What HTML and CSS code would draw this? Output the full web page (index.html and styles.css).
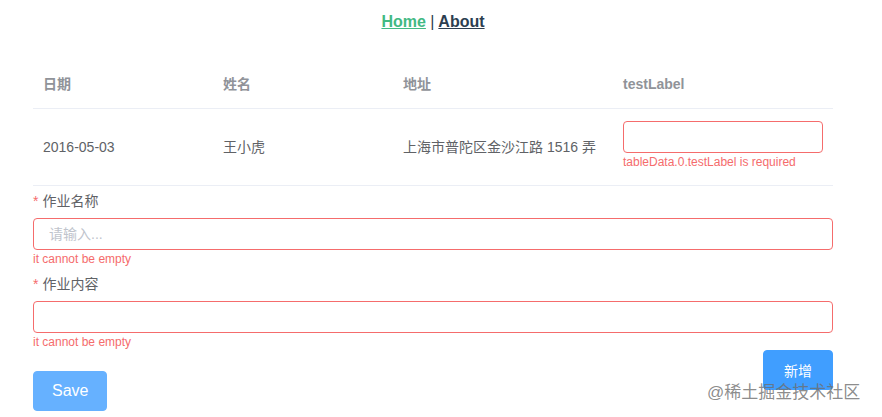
FILE: index.html
```html
<!DOCTYPE html>
<html lang="en">
<head>
    <meta charset="UTF-8">
    <meta name="viewport" content="width=device-width, initial-scale=1.0">
    <title>Form Table</title>
    <link rel="stylesheet" href="styles.css">
</head>
<body>
    <div id="app">
        <div class="nav">
            <a href="#" class="nav-link active">Home</a> <span class="sep">|</span> <a href="#" class="nav-link">About</a>
        </div>

        <div class="container">
            <table class="data-table">
                <thead>
                    <tr>
                        <th class="col-date">日期</th>
                        <th class="col-name">姓名</th>
                        <th class="col-addr">地址</th>
                        <th class="col-label">testLabel</th>
                    </tr>
                </thead>
                <tbody>
                    <tr>
                        <td>2016-05-03</td>
                        <td>王小虎</td>
                        <td>上海市普陀区金沙江路 1516 弄</td>
                        <td>
                            <input type="text" class="input is-error table-input">
                            <div class="error">tableData.0.testLabel is required</div>
                        </td>
                    </tr>
                </tbody>
            </table>

            <div class="form-item">
                <label class="form-label"><span class="required">*</span>作业名称</label>
                <input type="text" class="input is-error" placeholder="请输入...">
                <div class="error">it cannot be empty</div>
            </div>

            <div class="form-item">
                <label class="form-label"><span class="required">*</span>作业内容</label>
                <input type="text" class="input is-error">
                <div class="error">it cannot be empty</div>
            </div>

            <div class="actions">
                <button class="btn btn-save">Save</button>
                <button class="btn btn-add">新增</button>
            </div>
        </div>

        <div class="watermark">@稀土掘金技术社区</div>
    </div>
</body>
</html>
```

FILE: styles.css
```css
body {
    margin: 0;
    padding: 0;
    font-family: "Liberation Sans", Arial, "Noto Sans CJK SC", sans-serif;
    color: #606266;
    background: #fff;
}

#app {
    width: 866px;
    height: 417px;
    overflow: hidden;
}

.nav {
    padding: 13px 0 30px;
    text-align: center;
    font-size: 16px;
    line-height: 18px;
    font-weight: bold;
    color: #2c3e50;
}

.nav-link {
    color: #2c3e50;
}

.nav-link.active {
    color: #42b983;
}

.sep {
    font-weight: normal;
}

.container {
    width: 800px;
    margin: 0 auto;
}

.data-table {
    width: 800px;
    border-collapse: collapse;
    table-layout: fixed;
    font-size: 14px;
}

.col-date, .col-name {
    width: 160px;
}

.col-addr, .col-label {
    width: 200px;
}

th, td {
    text-align: left;
    padding: 12px 10px;
    border-bottom: 1px solid #ebeef5;
    line-height: 23px;
}

th {
    color: #909399;
    font-weight: bold;
}

td {
    color: #606266;
    vertical-align: middle;
    line-height: 20px;
}

.input {
    display: block;
    box-sizing: border-box;
    width: 100%;
    height: 32px;
    padding: 0 15px;
    font-size: 14px;
    font-family: inherit;
    color: #606266;
    border: 1px solid #dcdfe6;
    border-radius: 4px;
    outline: none;
    background: #fff;
}

.input::placeholder {
    color: #c0c4cc;
}

.input.is-error {
    border-color: #f56c6c;
}

.table-input {
    width: 200px;
}

.error {
    color: #f56c6c;
    font-size: 12px;
    line-height: 12px;
    padding-top: 3px;
}

td .error {
    height: 17px;
}

.form-item .error {
    padding-bottom: 4px;
}

.form-label {
    display: block;
    padding: 4px 0 6px;
    font-size: 14px;
    line-height: 22px;
    color: #606266;
}

.required {
    color: #f56c6c;
    margin-right: 4px;
}

.actions {
    display: flex;
    justify-content: space-between;
    align-items: flex-start;
    margin-top: -2px;
}

.btn {
    height: 40px;
    border: 1px solid #409eff;
    border-radius: 4px;
    color: #fff;
    font-family: inherit;
    cursor: pointer;
}

.btn-save {
    margin-top: 21px;
    padding: 0 18px;
    font-size: 16px;
    background-color: #66b1ff;
    border-color: #66b1ff;
}

.btn-add {
    padding: 0 20px;
    font-size: 14px;
    background-color: #409eff;
}

.watermark {
    position: absolute;
    left: 707px;
    top: 381px;
    font-size: 17px;
    line-height: 24px;
    color: rgba(110, 110, 110, 0.8);
    white-space: nowrap;
}
```
